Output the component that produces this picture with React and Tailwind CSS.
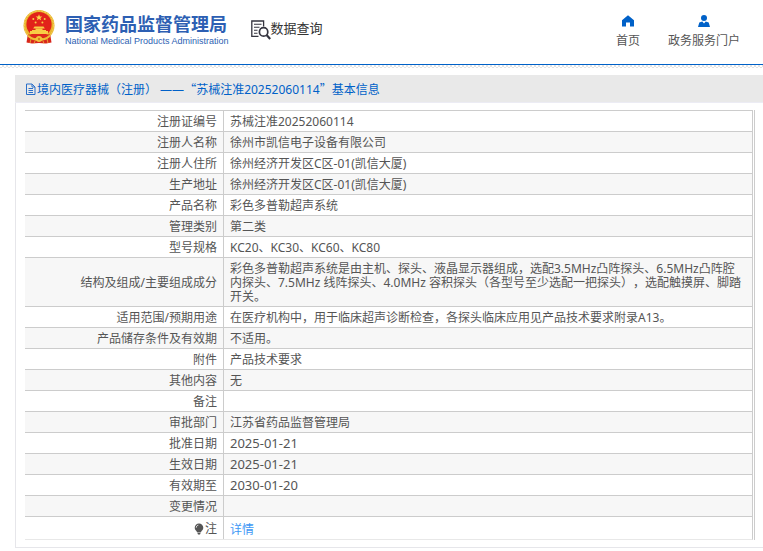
import React from "react";

const rows = [
  { label: "注册证编号", value: "苏械注准20252060114" },
  { label: "注册人名称", value: "徐州市凯信电子设备有限公司" },
  { label: "注册人住所", value: "徐州经济开发区C区-01(凯信大厦)" },
  { label: "生产地址", value: "徐州经济开发区C区-01(凯信大厦)" },
  { label: "产品名称", value: "彩色多普勒超声系统" },
  { label: "管理类别", value: "第二类" },
  { label: "型号规格", value: "KC20、KC30、KC60、KC80" },
  {
    label: "结构及组成/主要组成成分",
    value:
      "彩色多普勒超声系统是由主机、探头、液晶显示器组成，选配3.5MHz凸阵探头、6.5MHz凸阵腔内探头、7.5MHz 线阵探头、4.0MHz 容积探头（各型号至少选配一把探头），选配触摸屏、脚踏开关。",
  },
  {
    label: "适用范围/预期用途",
    value: "在医疗机构中，用于临床超声诊断检查，各探头临床应用见产品技术要求附录A13。",
  },
  { label: "产品储存条件及有效期", value: "不适用。" },
  { label: "附件", value: "产品技术要求" },
  { label: "其他内容", value: "无" },
  { label: "备注", value: "" },
  { label: "审批部门", value: "江苏省药品监督管理局" },
  { label: "批准日期", value: "2025-01-21", date: true },
  { label: "生效日期", value: "2025-01-21", date: true },
  { label: "有效期至", value: "2030-01-20", date: true },
  { label: "变更情况", value: "" },
];

function Emblem() {
  return (
    <svg viewBox="0 0 32 36" className="h-9 w-8 shrink-0" aria-hidden="true">
      <path d="M5 24 L3.500 33.500 L9 34.500 L16 34 L23 34.500 L28.500 33.500 L27 24 Z" fill="#d8261c" />
      <circle cx="16" cy="16.500" r="15.500" fill="#e9b52e" />
      <circle cx="16" cy="16.500" r="14.600" fill="none" stroke="#f6d462" strokeWidth="1" strokeDasharray="2 1.200" />
      <circle cx="16" cy="15.500" r="12.600" fill="#e2231a" />
      <path d="M16 5.200l.9 2.200 2.400.1-1.900 1.500.7 2.300-2.100-1.300-2.100 1.300.7-2.300-1.900-1.500 2.400-.1z" fill="#fbd84b" />
      <g fill="#f8cd45">
        <circle cx="10.300" cy="10" r="1" />
        <circle cx="21.700" cy="10" r="1" />
        <circle cx="12.600" cy="13.500" r="1" />
        <circle cx="19.400" cy="13.500" r="1" />
        <path d="M11.500 17.500h9l1.300 2h-11.600z" />
        <path d="M12.500 19.500h7v2h-7z" />
        <path d="M7 22h18v3H7z" />
        <path d="M9 21h14v1H9z" />
      </g>
      <path d="M5 25.500h22l-3 4h-4l-4-2-4 2H8z" fill="#dd2a1c" />
      <path d="M5.500 27c3 3 7 4 10.500 1.500 3.500 2.500 7.500 1.500 10.500-1.500" fill="none" stroke="#efbd35" strokeWidth="1.800" />
      <circle cx="16" cy="30" r="3" fill="#f1c43c" />
      <circle cx="16" cy="30" r="1.200" fill="#d8801f" />
      <path d="M8 30l-1 4M12 32l-1 2.500M20 32l1 2.500M24 30l1 4" stroke="#f0bd38" strokeWidth=".8" />
    </svg>
  );
}

function SearchDocIcon() {
  return (
    <svg viewBox="0 0 20 20" className="size-5 shrink-0" fill="none" stroke="#34343f" aria-hidden="true">
      <path d="M7.500 16.300H.8V1h11.800v5.500" strokeWidth="1.300" />
      <path d="M3 4.300h7.500M3 7.300h5.500M3 10.300h3.500M3 13.300h3.500" strokeWidth="1.100" />
      <circle cx="12.600" cy="11.900" r="4.200" strokeWidth="1.700" />
      <path d="M15.600 15l3.600 4" strokeWidth="2.200" />
    </svg>
  );
}

function HomeIcon() {
  return (
    <svg viewBox="0 0 12 12" className="size-3" fill="#0061c8" aria-hidden="true">
      <path d="M6 .3l6 5v6.200H8V7.500H4v4H0V5.300z" />
    </svg>
  );
}

function PersonIcon() {
  return (
    <svg viewBox="0 0 12 12" className="size-3" fill="#0061c8" aria-hidden="true">
      <circle cx="6" cy="3" r="3" />
      <path d="M0 12l1.300-4.500L4.300 6.500 6 8.500l1.700-2 3 1L12 12z" />
    </svg>
  );
}

function PageIcon() {
  return (
    <svg viewBox="0 0 12 12" className="size-3 shrink-0" fill="none" stroke="#2a6fc9" aria-hidden="true">
      <path d="M1.500 1h5.500l3 3v7.500h-8.500zM7 1v3h3M3.500 5.500h4.500M3.500 7.500h4.500M3.500 9.500h4.500" />
    </svg>
  );
}

function BulbIcon() {
  return (
    <svg viewBox="0 0 10 12" className="h-3 w-2.5" aria-hidden="true">
      <path d="M5 .5a4.300 4.300 0 0 1 4.300 4.300c0 2.200-1.800 2.800-2.300 4.400H3C2.500 7.600.7 7 .7 4.800A4.300 4.300 0 0 1 5 .5zM3.300 9.800h3.400l-.7 1.700H4z" fill="#555" />
      <path d="M2.300 4.600c0-1.300.8-2.200 2-2.400" fill="none" stroke="#fff" strokeWidth=".9" />
    </svg>
  );
}

export default function App() {
  return (
    <div className="bg-white font-['Noto_Sans','Noto_Sans_CJK_SC',sans-serif] text-xs text-[#555] [text-spacing-trim:space-all]">
      <header className="flex h-[65px] items-start justify-between border-b border-[#0061c8] pr-[23px] pl-[23px]">
        <div className="flex items-start">
          <a href="#home" className="flex items-start gap-2.5 pt-[9px] text-[#2d5fb3]">
            <Emblem />
            <span className="flex flex-col pt-1">
              <span className="font-['Noto_Sans_CJK_SC',sans-serif] text-lg leading-5 font-bold whitespace-nowrap">国家药品监督管理局</span>
              <span className="font-['Liberation_Sans',sans-serif] text-[9px] leading-4 whitespace-nowrap">
                National Medical Products Administration
              </span>
            </span>
          </a>
          <h1 className="ml-[22px] flex items-start pt-5 text-[#333]">
            <SearchDocIcon />
            <span className="text-[13px] leading-4 whitespace-nowrap">数据查询</span>
          </h1>
        </div>
        <nav className="flex gap-7 pt-[15px]">
          <a href="#index" className="flex flex-col items-center gap-1.5">
            <HomeIcon />
            <span className="leading-4">首页</span>
          </a>
          <a href="#portal" className="flex flex-col items-center gap-1.5">
            <PersonIcon />
            <span className="leading-4">政务服务门户</span>
          </a>
        </nav>
      </header>
      <div className="h-[3px] bg-[repeating-conic-gradient(#e4e4e4_0_25%,#fff_0_50%)] bg-size-[4px_4px]" />

      <main className="mt-[7px] ml-[15px] border-b border-l border-[#e6e6ea]">
        <h2 className="-ml-px flex h-7 items-center border-b border-[#ececf4] bg-[#e9e9e9] pt-px pl-2.5 text-[#0061c8]">
          <PageIcon />
          <span className="leading-4">
            境内医疗器械（注册） ——<span className="font-['Noto_Sans_CJK_SC',sans-serif]">“</span>苏械注准20252060114<span className="font-['Noto_Sans_CJK_SC',sans-serif]">”</span>基本信息
          </span>
        </h2>
        <div className="pt-[7px] pr-2 pb-[7px] pl-[9px]">
          <div className="border-r border-[#ccc] pr-px">
            <table className="w-full border-separate border-spacing-0 border-r border-b border-r-[#ccc] border-b-[#e8e8e8]">
              <tbody>
                {rows.map((row) => (
                  <tr key={row.label} className="even:bg-[#f7f7f7]">
                    <th scope="row" className="w-[199px] border-t border-r border-[#ccc] pt-1 pr-1.5 pb-0.5 text-right leading-[14px] font-normal">
                      {row.label}
                    </th>
                    <td className={"h-[21px] border-t border-[#ccc] pr-2 pl-1.5 leading-[14px] " + (row.date ? "py-[3px] text-[13px]" : "pt-1 pb-0.5")}>
                      {row.value}
                    </td>
                  </tr>
                ))}
                <tr>
                  <th scope="row" className="border-t border-r border-[#ccc] pt-0.5 pr-1.5 font-normal">
                    <span className="flex items-center justify-end gap-px leading-[14px]">
                      <BulbIcon />注
                    </span>
                  </th>
                  <td className="h-[23px] border-t border-[#ccc] pt-1 pl-1.5 leading-[14px]">
                    <a href="#detail" className="text-[#3d97f5]">详情</a>
                  </td>
                </tr>
              </tbody>
            </table>
          </div>
        </div>
      </main>
    </div>
  );
}
